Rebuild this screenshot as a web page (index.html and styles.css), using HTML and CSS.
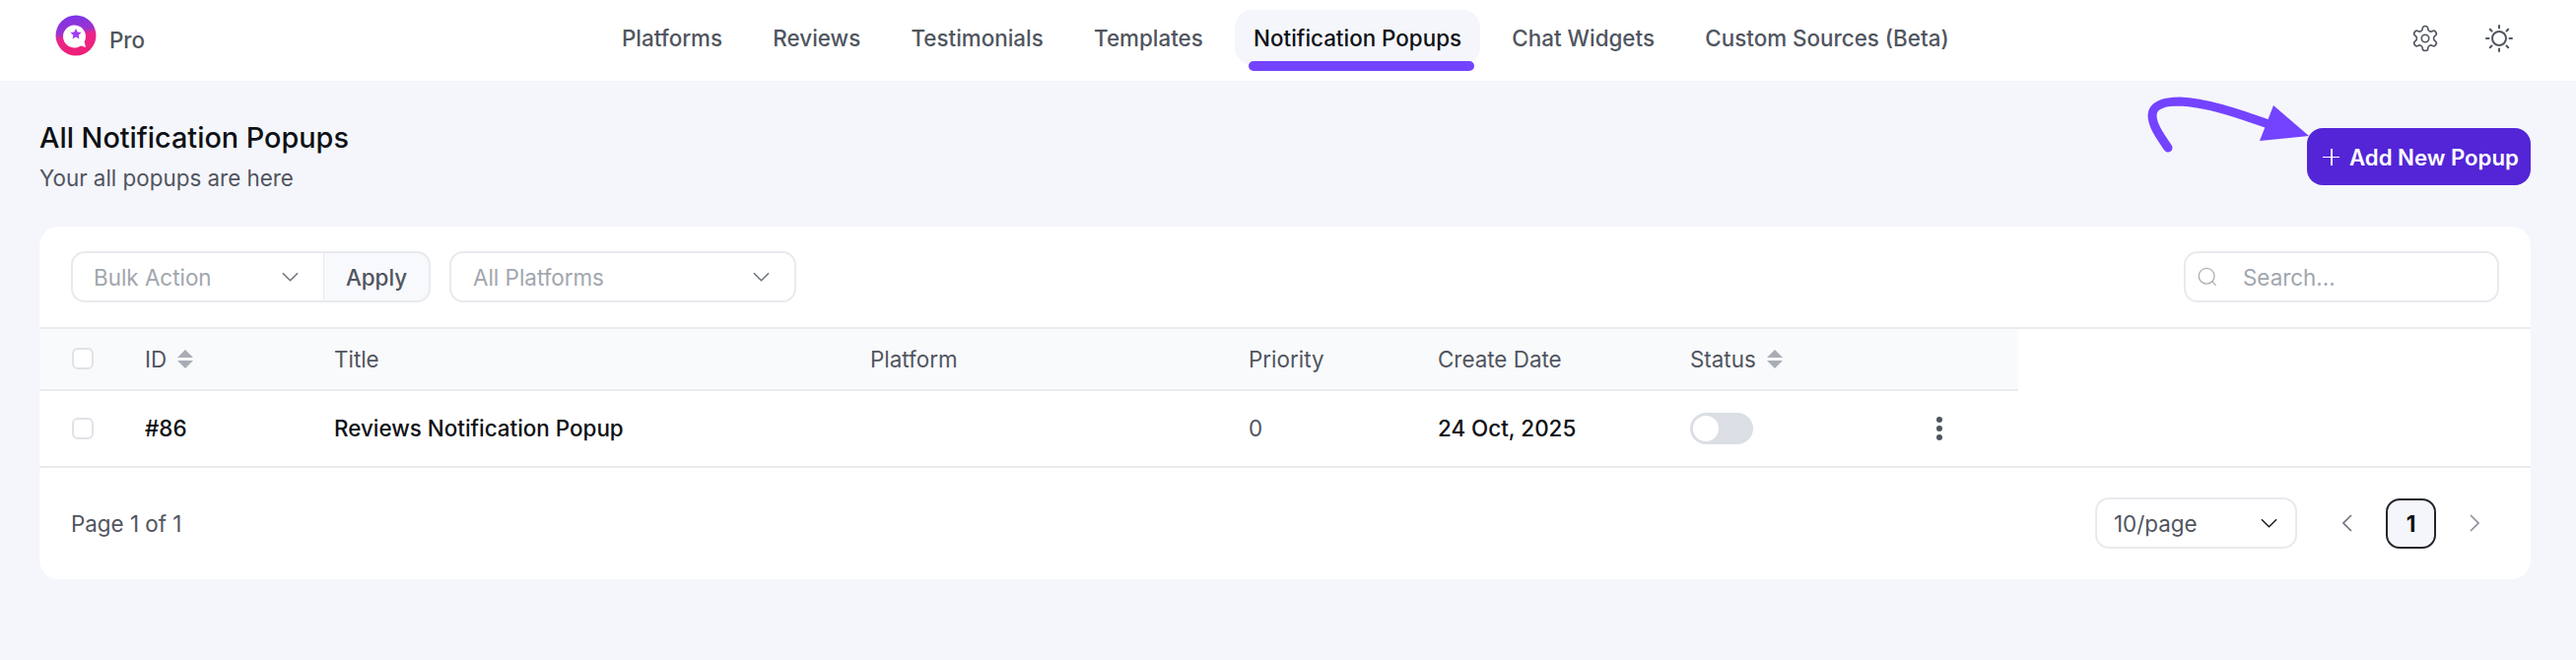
FILE: index.html
```html
<!DOCTYPE html>
<html lang="en">
<head>
<meta charset="utf-8">
<title>All Notification Popups</title>
<link rel="stylesheet" href="styles.css">
</head>
<body>
<header class="topbar">
  <div class="brand">
    <svg class="logo" viewBox="0 0 42 42" aria-hidden="true">
      <defs>
        <linearGradient id="lg" x1="0.1" y1="0.05" x2="0.3" y2="1">
          <stop offset="0" stop-color="#7a36e8"/>
          <stop offset="0.42" stop-color="#9c33cf"/>
          <stop offset="0.55" stop-color="#e9268c"/>
          <stop offset="1" stop-color="#f01f78"/>
        </linearGradient>
      </defs>
      <circle cx="21" cy="21" r="20.500" fill="url(#lg)"/>
      <path d="M19.500 10.500A11.500 11.500 0 1 0 26 31.500L31 33 29.600 27.500A11.500 11.500 0 0 0 19.500 10.500z" fill="#fff"/>
      <path d="M21 14l1.700 3.500 3.800.5-2.800 2.700.7 3.800-3.400-1.900-3.400 1.900.7-3.800-2.800-2.700 3.800-.5z" fill="#a13df5"/>
    </svg>
    <span class="brand-name">Pro</span>
  </div>
  <nav class="nav">
    <a class="nav-item">Platforms</a>
    <a class="nav-item">Reviews</a>
    <a class="nav-item">Testimonials</a>
    <a class="nav-item">Templates</a>
    <a class="nav-item active">Notification Popups</a>
    <a class="nav-item">Chat Widgets</a>
    <a class="nav-item">Custom Sources (Beta)</a>
  </nav>
  <div class="top-icons">
    <svg class="top-icon" viewBox="0 0 24 24" fill="none" stroke="#50555f" stroke-width="1.300" stroke-linecap="round" stroke-linejoin="round" aria-hidden="true">
      <path d="M12.220 2h-.440a2 2 0 0 0-2 2v.180a2 2 0 0 1-1 1.730l-.430.250a2 2 0 0 1-2 0l-.150-.080a2 2 0 0 0-2.730.730l-.220.380a2 2 0 0 0 .730 2.730l.150.100a2 2 0 0 1 1 1.720v.510a2 2 0 0 1-1 1.740l-.150.090a2 2 0 0 0-.730 2.730l.220.380a2 2 0 0 0 2.730.730l.150-.080a2 2 0 0 1 2 0l.430.250a2 2 0 0 1 1 1.730V20a2 2 0 0 0 2 2h.440a2 2 0 0 0 2-2v-.180a2 2 0 0 1 1-1.730l.430-.250a2 2 0 0 1 2 0l.150.080a2 2 0 0 0 2.730-.730l.220-.390a2 2 0 0 0-.730-2.730l-.150-.080a2 2 0 0 1-1-1.740v-.500a2 2 0 0 1 1-1.740l.150-.090a2 2 0 0 0 .730-2.730l-.220-.380a2 2 0 0 0-2.730-.730l-.150.080a2 2 0 0 1-2 0l-.430-.250a2 2 0 0 1-1-1.730V4a2 2 0 0 0-2-2z"/>
      <circle cx="12" cy="12" r="3"/>
    </svg>
    <svg class="top-icon sun" viewBox="0 0 30 30" fill="none" stroke="#50555f" stroke-width="2" stroke-linecap="round" aria-hidden="true">
      <circle cx="15" cy="15" r="7"/>
      <path d="M15 2v2.500M15 25.500V28M2 15h2.500M25.500 15H28M5.800 5.800l1.700 1.700M22.500 22.500l1.700 1.700M5.800 24.200l1.700-1.700M22.500 7.500l1.700-1.700"/>
    </svg>
  </div>
</header>

<main class="content">
  <section class="page-head">
    <div class="page-title-group">
      <h1 class="page-title">All Notification Popups</h1>
      <p class="page-sub">Your all popups are here</p>
    </div>
    <div class="add-wrap">
      <svg class="arrow" viewBox="0 0 170 74" aria-hidden="true">
        <path d="M22 57C13 44 6 34 6 24 6 14 18 10 34 10 60 11 90 21 124 33" fill="none" stroke="#7443ff" stroke-width="9" stroke-linecap="round"/>
        <path d="M129 14L165 45 115 50z" fill="#7443ff"/>
      </svg>
      <button class="add-btn"><span class="plus"></span>Add New Popup</button>
    </div>
  </section>

  <section class="card">
    <div class="toolbar">
      <div class="bulk">
        <div class="select select-bulk"><span class="ph">Bulk Action</span><svg class="chev" viewBox="0 0 18 10" aria-hidden="true"><path d="M1 1l8 8 8-8"/></svg></div>
        <button class="apply">Apply</button>
      </div>
      <div class="select select-platform"><span class="ph">All Platforms</span><svg class="chev" viewBox="0 0 18 10" aria-hidden="true"><path d="M1 1l8 8 8-8"/></svg></div>
      <div class="search">
        <svg class="search-icon" viewBox="0 0 24 24" aria-hidden="true"><circle cx="11" cy="11" r="9.500"/><path d="M18 18l4 4"/></svg>
        <span class="ph">Search...</span>
      </div>
    </div>

    <div class="table">
      <div class="row head">
        <div class="cell c-check"><span class="check"></span></div>
        <div class="cell c-id">ID<span class="sort"></span></div>
        <div class="cell c-title">Title</div>
        <div class="cell c-platform">Platform</div>
        <div class="cell c-priority">Priority</div>
        <div class="cell c-date">Create Date</div>
        <div class="cell c-status">Status<span class="sort"></span></div>
        <div class="cell c-menu"></div>
      </div>
      <div class="row body">
        <div class="cell c-check"><span class="check"></span></div>
        <div class="cell c-id strong">#86</div>
        <div class="cell c-title strong">Reviews Notification Popup</div>
        <div class="cell c-platform"></div>
        <div class="cell c-priority">0</div>
        <div class="cell c-date strong">24 Oct, 2025</div>
        <div class="cell c-status"><span class="toggle"><span class="knob"></span></span></div>
        <div class="cell c-menu"><span class="dots"><i></i><i></i><i></i></span></div>
      </div>
    </div>

    <div class="footer">
      <span class="page-count">Page 1 of 1</span>
      <div class="pager">
        <div class="select select-size"><span>10/page</span><svg class="chev dark" viewBox="0 0 18 10" aria-hidden="true"><path d="M1 1l8 8 8-8"/></svg></div>
        <div class="pages">
          <svg class="pg-arrow" viewBox="0 0 10 18" aria-hidden="true"><path d="M9 1L1 9l8 8"/></svg>
          <span class="page-num">1</span>
          <svg class="pg-arrow light" viewBox="0 0 10 18" aria-hidden="true"><path d="M1 1l8 8-8 8"/></svg>
        </div>
      </div>
    </div>
  </section>
</main>
</body>
</html>
```
FILE: styles.css
```css
* { box-sizing: border-box; }
html, body { margin: 0; padding: 0; }
body {
  height: 670px;
  overflow: hidden;
  background: #f5f6fb;
  color: #0e1116;
  font-family: Inter, "Liberation Sans", sans-serif;
  font-size: 22.400px;
}

.topbar {
  height: 82px;
  background: #fff;
  display: flex;
  align-items: center;
  padding: 0 40px 0 56px;
}
.brand { display: flex; align-items: center; gap: 13px; width: 556px; margin-top: -11px; }
.logo { width: 42px; height: 42px; flex: none; }
.brand-name { color: #50555f; font-weight: 500; margin-top: 9px; }

.nav { display: flex; gap: 13.300px; height: 56px; margin-top: -6px; }
.nav-item {
  position: relative;
  display: flex;
  align-items: center;
  padding: 0 19px;
  color: #50555f;
  font-weight: 500;
  border-radius: 18px;
  white-space: nowrap;
}
.nav-item.active { background: #f5f6fb; color: #0e1116; }
.nav-item.active::after {
  content: "";
  position: absolute;
  left: 14px;
  right: 6px;
  bottom: -6px;
  height: 10px;
  background: #7443ff;
  border-radius: 5px;
}

.top-icons { margin-left: auto; display: flex; align-items: center; gap: 45.500px; padding-right: 23px; margin-top: -5px; }
.top-icon { width: 30px; height: 30px; display: block; }

.content { padding: 0 46px 0 40px; }
.page-head { display: flex; justify-content: space-between; height: 148px; }
.page-title { margin: 40px 0 0; font-size: 28.800px; line-height: 35px; font-weight: 500; color: #0e1116; }
.page-sub { margin: 8px 0 0; line-height: 32px; color: #50555f; }

.add-wrap { position: relative; margin-top: 48px; }
.arrow { position: absolute; left: -163px; top: -37px; width: 170px; height: 74px; overflow: visible; }
.add-btn {
  height: 58px;
  width: 227px;
  border: 0;
  border-radius: 16px;
  background: #5325d6;
  color: #fff;
  font: 600 22.200px Inter, "Liberation Sans", sans-serif;
  display: flex;
  align-items: center;
  gap: 10px;
  padding: 0 0 0 16px;
  white-space: nowrap;
}
.plus { position: relative; width: 17px; height: 17px; flex: none; }
.plus::before, .plus::after { content: ""; position: absolute; background: #fff; }
.plus::before { left: 0; right: 0; top: 8px; height: 1.500px; }
.plus::after { top: 0; bottom: 0; left: 8px; width: 1.500px; }

.card { background: #fff; border-radius: 20px; height: 358px; }

.toolbar { display: flex; align-items: center; padding: 25px 32px; height: 102px; }
.bulk { display: flex; }
.select {
  height: 52px;
  display: flex;
  align-items: center;
  justify-content: space-between;
  background: #fff;
  border: 2px solid #e8eaee;
  border-radius: 14px;
  padding: 0 25px 0 22px;
}
.ph { color: #a1a6ae; }
.select-bulk { width: 257px; border-radius: 14px 0 0 14px; border-right-width: 1px; padding-left: 21px; }
.apply {
  width: 108px;
  height: 52px;
  border: 2px solid #e8eaee;
  border-left: 0;
  border-radius: 0 14px 14px 0;
  background: #f8f9fc;
  color: #50555f;
  font: 500 22.400px Inter, "Liberation Sans", sans-serif;
  padding: 0;
}
.select-platform { width: 352px; margin-left: 19px; }
.chev { width: 17px; height: 10px; fill: none; stroke: #6c727c; stroke-width: 1.600; flex: none; }
.chev.dark { stroke: #1a1d22; }

.search {
  margin-left: auto;
  width: 320px;
  height: 52px;
  display: flex;
  align-items: center;
  gap: 26px;
  border: 2px solid #e8eaee;
  border-radius: 14px;
  padding: 0 12px;
}
.search-icon { width: 20px; height: 20px; fill: none; stroke: #a9aeb5; stroke-width: 1.500; stroke-linecap: round; flex: none; }

.table { display: flex; flex-direction: column; }
.row { display: flex; align-items: center; }
.row.head {
  height: 64px;
  border-top: 2px solid #e9ebef;
  padding-bottom: 2px;
  background: linear-gradient(to right, #f9fafc 2008px, #fff 2008px);
  color: #50555f;
  position: relative;
}
.row.head::after {
  content: "";
  position: absolute;
  left: 0;
  width: 2008px;
  bottom: -1px;
  height: 2px;
  background: #e9ebef;
}
.row.body { height: 79px; border-bottom: 2px solid #e9ebef; color: #50555f; }
.cell { display: flex; align-items: center; white-space: nowrap; }
.strong { color: #0e1116; font-weight: 500; }
.c-check { width: 107px; padding-left: 33px; }
.c-id { width: 192px; gap: 11px; }
.c-title { width: 544px; }
.c-platform { width: 384px; }
.c-priority { width: 192px; }
.c-date { width: 256px; }
.c-status { width: 250px; gap: 11px; }
.c-menu { flex: none; }

.check { width: 22px; height: 22px; border: 2px solid #dfe2e7; border-radius: 6px; background: #fff; display: block; }
.sort { position: relative; width: 17px; height: 19px; display: block; }
.sort::before, .sort::after { content: ""; position: absolute; left: 0; border-left: 8.500px solid transparent; border-right: 8.500px solid transparent; }
.sort::before { top: 0; border-bottom: 8.500px solid #a8adb5; }
.sort::after { bottom: 0; border-top: 8.500px solid #a8adb5; }

.toggle { width: 64px; height: 32px; border-radius: 16px; background: #dcdee6; display: block; padding: 3px; }
.knob { width: 26px; height: 26px; border-radius: 50%; background: #fff; display: block; }
.dots { display: flex; flex-direction: column; gap: 3px; }
.dots i { width: 6px; height: 6px; border-radius: 50%; background: #50555f; display: block; }

.footer { display: flex; justify-content: space-between; align-items: center; height: 114px; padding: 0 32px; margin-top: -1px; }
.page-count { color: #50555f; }
.pager { display: flex; align-items: center; gap: 46px; margin-right: 20px; }
.select-size { width: 205px; padding: 0 18px 0 17px; color: #50555f; }
.pages { display: flex; align-items: center; gap: 34px; }
.pg-arrow { width: 10px; height: 18px; fill: none; stroke: #6c727c; stroke-width: 1.600; }
.pg-arrow.light { stroke: #8c9199; }
.page-num { width: 51px; height: 51px; border: 2px solid #23262b; border-radius: 14px; background: #f5f6fb; display: flex; align-items: center; justify-content: center; font-weight: 700; color: #0e1116; }
```
